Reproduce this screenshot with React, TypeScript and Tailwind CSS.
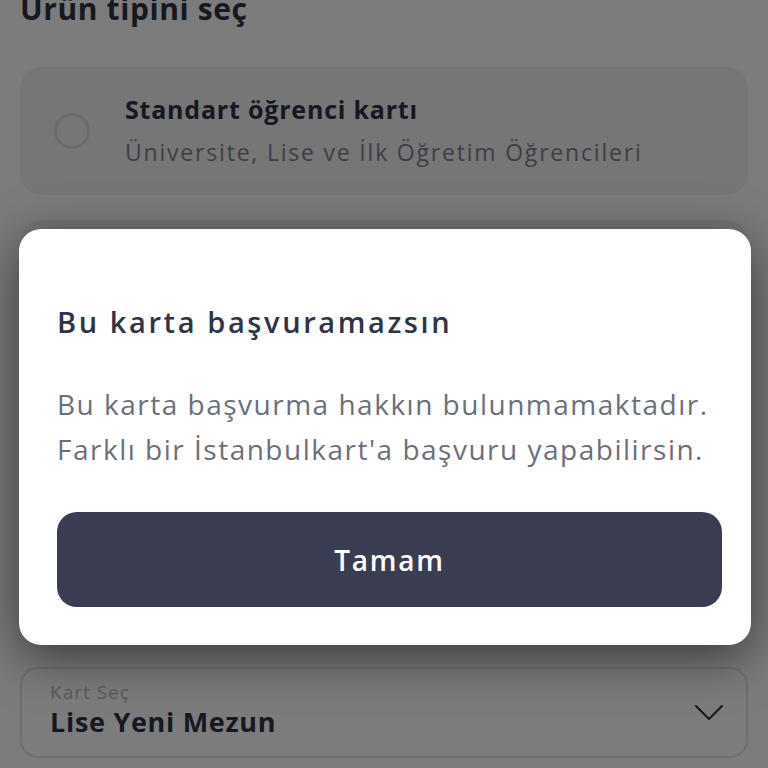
import React from 'react';

const font = { fontFamily: '"Open Sans", Lato, sans-serif' };

function Chevron() {
  return (
    <svg width="30" height="17" viewBox="0 0 30 17" fill="none">
      <path d="M2 2l13 13L28 2" stroke="#2f3447" strokeWidth="2" strokeLinecap="round" strokeLinejoin="round" />
    </svg>
  );
}

export default function App() {
  return (
    <div className="relative h-[768px] w-[768px] overflow-hidden bg-white" style={font}>
      {/* Page behind the dialog */}
      <div className="flex flex-col px-5">
        <h1 className="mt-[-10px] text-[30px] font-bold leading-[38px] tracking-[0.02em] text-[#2f3447]">Ürün tipini seç</h1>

        <div className="mt-[39px] flex h-[128px] items-center gap-[35px] rounded-[22px] bg-[#f2f2f3] px-[34px]">
          <div className="h-[36px] w-[36px] shrink-0 rounded-full border-[3px] border-[#dcdcdf]" />
          <div className="-mt-[3px] flex flex-col gap-[12px]">
            <span className="text-[25px] font-bold leading-[32px] tracking-[0.8px] text-[#2f3447]">Standart öğrenci kartı</span>
            <span className="text-[23px] leading-[30px] tracking-[1.8px] text-[#80838d]">Üniversite, Lise ve İlk Öğretim Öğrencileri</span>
          </div>
        </div>

        <div className="mt-[25px] h-[420px] rounded-[22px] bg-[#f2f2f3]" />

        <div className="mt-[27px] flex h-[91px] items-center justify-between rounded-[18px] border-2 border-[#e4e4e7] pl-[28px] pr-[22px]">
          <div className="flex flex-col self-start pt-[11px]">
            <span className="text-[19px] leading-[24px] tracking-[1px] text-[#b9bbc2]">Kart Seç</span>
            <span className="mt-[2px] text-[27px] font-bold leading-[32px] tracking-[0.7px] text-[#2f3447]">Lise Yeni Mezun</span>
          </div>
          <Chevron />
        </div>
      </div>

      {/* Overlay */}
      <div className="absolute inset-0 bg-black/[0.515]" />

      {/* Dialog */}
      <div className="absolute left-[19px] right-[17px] top-[229px] flex h-[416px] flex-col rounded-[22px] bg-white pl-[38px] pr-[29px] pt-[75px] shadow-[0_12px_50px_rgba(0,0,0,0.55)]">
        <h2 className="whitespace-nowrap text-[29px] font-semibold leading-[36px] tracking-[2.6px] text-[#2f3447]">Bu karta başvuramazsın</h2>
        <p className="mt-[42px] whitespace-nowrap text-[28px] leading-[45px] tracking-[1.5px] text-[#6c6f7a]">
          Bu karta başvurma hakkın bulunmamaktadır.
          <br />
          Farklı bir İstanbulkart'a başvuru yapabilirsin.
        </p>
        <button className="mt-[40px] flex h-[95px] shrink-0 items-center justify-center rounded-[20px] bg-[#3a3d52] text-[28px] font-semibold tracking-[1.8px] text-white">
          Tamam
        </button>
      </div>
    </div>
  );
}
